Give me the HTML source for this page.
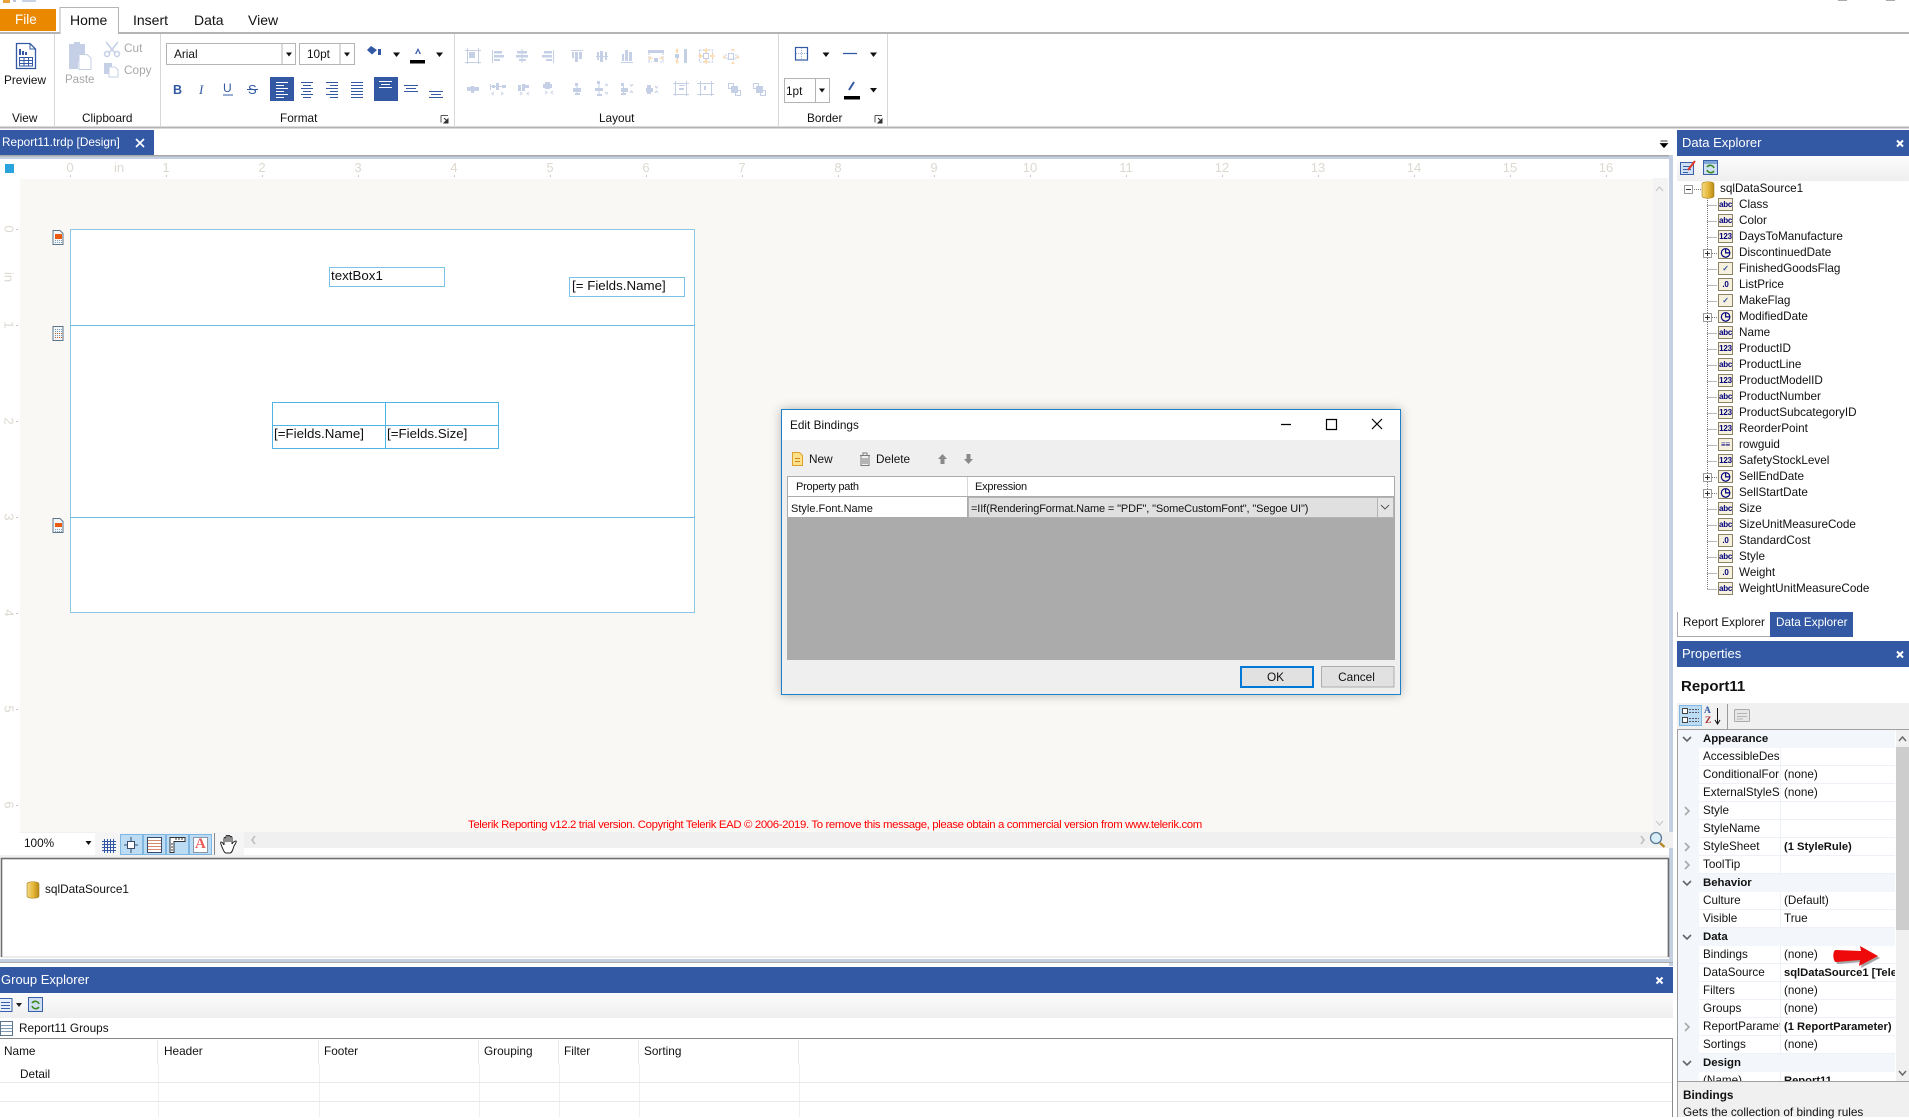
<!DOCTYPE html>
<html><head><meta charset="utf-8"><title>Report Designer</title>
<style>
html,body{margin:0;padding:0;background:#fff}
body{width:1909px;height:1117px;position:relative;overflow:hidden;font:11.8px "Liberation Sans",sans-serif;color:#111}
.a,.t{position:absolute}
.t{white-space:nowrap;line-height:16px}
.w{color:#fff}.g{color:#a8a8a8}
.tab{font-size:14px}
.lbl{text-align:center}
.rul{color:#ddd8d0;font-size:13px;transform:translateX(-50%)}
.rv{color:#ddd8d0;font-size:13px;transform:translate(-50%,-50%) rotate(90deg);line-height:13px}
.bx{position:absolute;box-sizing:border-box;border:1px solid #7cc1e6;background:#fff}
.d{font-size:13.33px}
#tree{position:absolute;left:1677px;top:181px;width:232px;font-size:11.7px}
.r{position:relative;height:16px;line-height:16px;padding-left:62px;white-space:nowrap}
.ic{position:absolute;left:41px;top:1px;width:13px;height:11px;border:1px solid #8c8366;background:#f6f0df;color:#00007a;font:bold 8px/11px "Liberation Sans",sans-serif;text-align:center;letter-spacing:-.2px}
.ic.k{font-size:12px;line-height:10px}
#pg{position:absolute;left:1678px;top:730px;width:217px;height:351px;overflow:hidden;background:#f3f6fb;font-size:11.7px}
.pc{height:18px;line-height:18px;font-weight:bold;padding-left:25px;background:#f3f6fb;font-size:11.4px}
.pr{height:18px;margin-left:21px;background:#fff;border-bottom:1px solid #eef2f8;box-sizing:border-box;line-height:18px;white-space:nowrap;overflow:hidden}
.pr b{font-weight:normal;display:inline-block;vertical-align:top;width:77px;padding-left:4px;overflow:hidden;height:17px;border-right:1px solid #eef2f8}
.pr span{padding-left:3px}
.pr em{font-style:normal;font-weight:bold;font-size:11.2px}
</style></head><body>

<svg class="a" style="left:0;top:0" width="1909" height="1117" viewBox="0 0 1909 1117">
<!-- top bits -->
<rect x="3" y="0" width="7" height="3" fill="#e9a23a"/><rect x="13" y="0" width="3" height="2" fill="#b9c5dc"/><rect x="22" y="0" width="14" height="2" fill="#c9d3e6"/>
<rect x="1838" y="0" width="9" height="1" fill="#aaa"/><rect x="1886" y="0" width="9" height="1" fill="#aaa"/>
<!-- ribbon lines -->
<rect x="0" y="32" width="1909" height="2" fill="#b4b4b4"/>
<rect x="0" y="126.500" width="1909" height="2" fill="#b4b4b4"/>
<path d="M54.500 34V126M160.500 34V126M454.500 34V126M778.500 34V126M887.500 34V126" stroke="#d8d8d8"/>
<!-- home tab -->
<path d="M60 33V7.500H118.500V33" fill="#fff" stroke="#b4b4b4"/><rect x="60.500" y="31" width="57.500" height="3" fill="#fff"/>
<rect x="0" y="9" width="56" height="22" fill="#ea8800"/>
<!-- Preview icon -->
<g fill="none" stroke="#3359a4"><path d="M16.500 43.500H30L35.500 49V68.500H16.500Z" stroke-width="1.300"/><path d="M30 43.500V49H35.500"/><path d="M19.500 57.500H32.500V66H19.500ZM19.500 60.500H32.500M19.500 63.500H32.500M24 57.500V66M28.500 57.500V66"/></g>
<path d="M19 49h2v6h-2zM22 51h2v4h-2zM25 52h2v3h-2z" fill="#3359a4"/>
<!-- Paste -->
<path d="M69 44H85V62H78V69H69Z" fill="#c5d0e6"/><rect x="74" y="42" width="6" height="4" fill="#c5d0e6"/>
<path d="M79 54.500H87L91 58V69.500H79Z" fill="#fff" stroke="#c5d0e6"/>
<!-- Cut -->
<g fill="none" stroke="#c5d0e6" stroke-width="1.500"><path d="M106 42L115 53M118 42L109 53"/><circle cx="107" cy="54" r="2.500"/><circle cx="117" cy="54" r="2.500"/></g>
<!-- Copy -->
<path d="M104 63H112V74H104Z" fill="#c5d0e6"/><path d="M109 67H115L118 70V77H109Z" fill="#fff" stroke="#c5d0e6"/>
<!-- combos -->
<g fill="#fff" stroke="#b4b4b4"><rect x="166.500" y="43.500" width="129" height="21"/><rect x="299.500" y="43.500" width="55" height="21"/><rect x="784.500" y="78.500" width="45" height="24"/></g>
<path d="M282 44V64M340 44V64M815.500 79V102" stroke="#b4b4b4"/>
<g fill="#111"><path d="M286 52.500h6l-3 4zM344 52.500h6l-3 4zM393 52.500h7l-3.500 4.500zM436 52.500h7l-3.500 4.500zM819 88.500h6l-3 4zM822.500 52.500h7l-3.500 4.500zM870 52.500h7l-3.500 4.500zM870 88h7l-3.500 4.500z"/></g>
<!-- fill / font color -->
<path d="M367 50L371 46L377 50L372 54.500ZM378 49h3v6h-3z" fill="#3359a4"/><path d="M418 48l-3 6h1.500l1.500-3.500 1.500 3.500h1.500z" fill="#3359a4"/>
<rect x="410" y="60" width="15" height="3.500" fill="#000"/>
<rect x="223" y="94.500" width="10" height="1" fill="#3359a4"/><rect x="247" y="89" width="11" height="1" fill="#3359a4"/>
<!-- align -->
<rect x="270" y="77" width="24" height="24" fill="#3359a4"/><rect x="374" y="77" width="24" height="24" fill="#3359a4"/>
<path d="M276 82.500h12M276 85.500h8M276 88.500h12M276 91.500h8M276 94.500h12M276 97.500h8M379 81.500h13M381 84.500h9M379 87.500h13" stroke="#fff"/>
<path d="M301 82.500h12M303 85.500h8M301 88.500h12M303 91.500h8M301 94.500h12M303 97.500h8M326 82.500h12M330 85.500h8M326 88.500h12M330 91.500h8M326 94.500h12M330 97.500h8M351 82.500h12M351 85.500h12M351 88.500h12M351 91.500h12M351 94.500h12M351 97.500h12M404 85.500h14M406 88.500h10M404 91.500h14M429 91.500h14M431 94.500h10M429 97.500h14" stroke="#3359a4"/>
<!-- launcher -->
<path d="M441 115.500h7M441 115.500v7M875 115.500h7M875 115.500v7" stroke="#555" fill="none"/><path d="M444 118l4 4M878 118l4 4M448 119v4h-4zM882 119v4h-4z" stroke="#333" fill="#333"/>
<!-- layout icons -->
<g fill="#c5d0e6" stroke="none">
<path d="M465 50h16v1h-16zM465 62h16v1h-16zM467 48h1v16h-1zM478 48h1v16h-1zM469 52h6v6h-6z"/>
<path d="M492 50h1v13h-1zM494 51h8v2.500h-8zM494 55h10v2.500h-10zM494 59h6v2h-6z"/>
<path d="M521.500 49h1v14h-1zM517 51h10v2.500h-10zM516 55h12v2.500h-12zM519 59h7v2h-7z"/>
<path d="M553 50h1v13h-1zM544 51h8v2.500h-8zM542 55h10v2.500h-10zM546 59h6v2h-6z"/>
<path d="M571 50h12v1h-12zM572 52h2v6h-2zM575 52h3v10h-3zM579 52h3v7h-3z"/>
<path d="M596 56h12v1h-12zM597 52h2v8h-2zM600 51h3v11h-3zM605 52h2v8h-2z"/>
<path d="M621 62h12v1h-12zM622 54h2v7h-2zM625 50h3v11h-3zM629 52h3v9h-3z"/>
<path d="M648 50h16v3h-16zM654 58h4v4h-4zM684 49h3v14h-3zM675 54h4v4h-4zM703 53h1v6h-1zM708 53h1v6h-1zM703 53h6v1h-6zM703 58h6v1h-6zM728 53h6v1h-6zM728 59h6v1h-6zM728 53h1v7h-1zM733 53h1v7h-1z"/>
<path d="M467 87h12v4h-12zM471 86h3v7h-3zM490 84h1v6h-1zM491 86h15v1h-15zM502 85h4v3h-4zM492 85h3v3h-3zM496 83h3v7h-3zM518 85h3v6h-3zM522 84h3v7h-3zM525 85h4v3h-4zM543 84h9v4h-9zM545 82h5v7h-5z"/>
<path d="M575 83h3v3h-3zM573 88h8v4h-8zM575 93h5v2h-5zM576.500 85h1v9h-1zM597 81h3v3h-3zM595 88h8v3h-8zM597 94h5v2h-5zM598.500 83h1v12h-1zM621 83h3v3h-3zM621 88h7v4h-7zM621 93h5v2h-5zM623 86h1v8h-1zM647 85h4v9h-4zM646 88h7v4h-7z"/>
<path d="M673 83h16v1h-16zM673 94h16v1h-16zM675 81h1v15h-1zM686 81h1v15h-1zM679 85h6v1h-6zM679 88h5v2h-5zM697 83h17v1h-17zM697 94h17v1h-17zM700 81h1v15h-1zM711 81h1v15h-1zM704 86h2v4h-2z"/>
<path d="M731 86h7v7h-7zM756 86h7v7h-7z"/>
</g>
<g fill="none" stroke="#c5d0e6">
<path d="M728.500 83.500h5v5h-5zM735.500 90.500h5v5h-5zM753.500 83.500h5v5h-5zM760.500 90.500h5v5h-5z"/>
<path d="M494 92l-2 1.500 2 1.500M501 92l2 1.500-2 1.500M520 92l2 1.500-2 1.500M529 92l-2 1.500 2 1.500M545 91l2 1.500-2 1.500M553 91l-2 1.500 2 1.500M605 86l1.500-2 1.500 2M605 92l1.500 2 1.500-2M630 84l1.500 2 1.500-2M630 93l1.500-2 1.500 2M655 86l1.500 2 1.500-2M655 93l1.500-2 1.500 2"/>
<path d="M649 53v9M663 53v9M648 62h4M660 62h4M677.500 51v11M699.500 50v12h13V50zM726 54v5h10v-5" stroke-dasharray="2 1"/>
</g>
<g fill="#fbdcb4">
<path d="M648 58l3-2v1.500h2v1h-2V60zM664 58l-3-2v1.500h-2v1h2V60zM677 48l2 3h-1v2h-2v-2h-1zM677 64l2-3h-1v-2h-2v2h-1z"/>
<path d="M706 48l3 3h-2v2h-2v-2h-2zM706 64l3-3h-2v-2h-2v2h-2zM698 56l3-3v2h2v2h-2v2zM715 56l-3-3v2h-2v2h2v2zM731 49h4l-2 3zM731 64h4l-2-3zM723 55v4l3-2zM739 55v4l-3-2z"/>
</g>
<!-- border group -->
<rect x="795.500" y="47.500" width="12" height="12.500" fill="none" stroke="#3359a4" stroke-width="1.200"/>
<path d="M801.500 48v12M796 53.500h11" stroke="#9db0d6" stroke-dasharray="1 1"/>
<path d="M843 53.500h14" stroke="#3359a4" stroke-width="1.300"/>
<path d="M849 90l5-8" stroke="#3359a4" stroke-width="2"/><rect x="844" y="96" width="16" height="3.500" fill="#000"/>
<!-- doc tabs -->
<rect x="0" y="130" width="154" height="25" fill="#3359a4"/>
<rect x="0" y="155" width="1669" height="1.500" fill="#a8a8a8"/><rect x="0" y="156.500" width="1669" height="2.500" fill="#c4cfe2"/>
<path d="M136 139l8 8M144 139l-8 8" stroke="#fff" stroke-width="1.600"/>
<path d="M1660.500 141h7M1660.500 143.500h7l-3.500 4z" stroke="#000" fill="#000" stroke-width=".8"/>
<!-- design bg -->
<rect x="20" y="179" width="1633" height="653" fill="#f9f8f5"/>
<rect x="1653" y="159" width="15" height="673" fill="#f4f4f4"/><rect x="1653" y="159" width="15" height="19" fill="#fff"/>
<rect x="1669" y="155" width="4" height="811" fill="#c4cfe2"/>
<path d="M1656 191l3.500-4 3.500 4M1656 821l3.500 4 3.500-4" fill="none" stroke="#ccc" stroke-width="1.300"/>
<rect x="5" y="164" width="9" height="9" fill="#29a3de"/>
<path d="M70.500 175v2M166.500 175v2M262.500 175v2M358.500 175v2M454.500 175v2M550.500 175v2M646.500 175v2M742.500 175v2M838.500 175v2M934.500 175v2M1030.500 175v2M1126.500 175v2M1222.500 175v2M1318.500 175v2M1414.500 175v2M1510.500 175v2M1606.500 175v2" stroke="#c8c8c8"/>
<path d="M16 229.500h2M16 325.500h2M16 421.500h2M16 517.500h2M16 613.500h2M16 709.500h2M16 805.500h2" stroke="#c8c8c8"/>
<rect x="70.500" y="229.500" width="624" height="383" fill="#fff" stroke="#8cc8e6"/>
<path d="M70 325.500H695M70 517.500H695" stroke="#6fbbe0"/>
<!-- section icons -->
<g stroke="#5d7489" fill="#f4f7fa" stroke-width="1">
<path d="M53 230.500h7l3 3v11h-10zM53 326.500h10v14h-10zM53 518.500h7l3 3v11h-10z"/></g>
<rect x="55" y="234" width="7" height="5" fill="#ec5a12"/>
<path d="M55 240.500h7M55 242.500h7M55 329.500h7M55 331.500h7M55 335.500h7M55 529.500h7M55 531.500h7" stroke="#7f9bb5" stroke-dasharray="1 1"/>
<path d="M55 333.500h7M55 337.500h7" stroke="#c8581e" stroke-dasharray="1 1"/>
<rect x="55" y="523" width="7" height="4" fill="#ec5a12"/>
<!-- bottom toolbar -->
<rect x="20" y="832" width="1653" height="16" fill="#f0f0f0"/>
<rect x="20" y="833" width="75" height="22" fill="#fff"/><path d="M85.500 841h6l-3 4z" fill="#111"/>
<rect x="95" y="832" width="149" height="23" fill="#f5f5f5"/>
<path d="M102 841.500h14M102 844.500h14M102 847.500h14M102 850.500h14M104.500 839v14M107.500 839v14M110.500 839v14M113.500 839v14" stroke="#3359a4"/>
<g fill="#bcdcf4" stroke="#7fb7e2"><rect x="120.500" y="834.500" width="22" height="20"/><rect x="143.500" y="834.500" width="22" height="20"/><rect x="166.500" y="834.500" width="22" height="20"/><rect x="189.500" y="834.500" width="22" height="20"/></g>
<path d="M214.500 833v22" stroke="#888"/>
<g fill="none" stroke="#3a4a6a"><path d="M131 837v16M124 845h14" /><rect x="127.500" y="841.500" width="7" height="7" fill="#fff"/></g>
<rect x="147.500" y="837.500" width="14" height="15" fill="#fff" stroke="#3a4a6a"/>
<path d="M148 840.500h13M148 843.500h13M148 846.500h13M148 849.500h13" stroke="#d58a70"/>
<path d="M170 837.500h15v4h-11v11h-4z" fill="#fff" stroke="#333"/><path d="M176 838v2M179 838v2M182 838v2M171 844h2M171 847h2M171 850h2" stroke="#333"/>
<rect x="193.500" y="837.500" width="14" height="15" fill="#fff" stroke="#8896aa"/>
<path d="M224 845V839c0-2 2-2 2 0M226 842v-5c0-2 2-2 2 0v5M228 842v-5c0-2 2-2 2 0v5M230 842v-4c0-2 2-2 2 0v6c1-2 3-3 4-3 1 1-1 3-2 5-1 3-2 7-4 7h-4c-2 0-3-4-4-6-1-3-2-4-1-5 1 0 2 1 3 3" fill="#fff" stroke="#222" stroke-width="1"/>
<path d="M255 836l-3 4 3 4M1641 836l3 4-3 4" fill="none" stroke="#bbb" stroke-width="1.500"/>
<circle cx="1656" cy="838" r="5.500" fill="#d9ecf7" stroke="#5a7a96" stroke-width="1.300"/><path d="M1660 843l4.500 4" stroke="#b48a2a" stroke-width="2.500"/>
<!-- sql box -->
<rect x="0" y="855" width="1669" height="4" fill="#f0f0f0"/>
<rect x="1.500" y="859" width="1666.500" height="98" fill="#fff" stroke="#d8d8d8"/>
<path d="M1.500 957V858.500H1668.500V957" fill="none" stroke="#6e6e6e" stroke-width="1.600"/>
<rect x="0" y="959" width="1673" height="3" fill="#c4cfe2"/><rect x="0" y="962" width="1673" height="1" fill="#aaa"/>
<defs><linearGradient id="db" x1="0" x2="1" y1="0" y2="0"><stop offset="0" stop-color="#f2d98a"/><stop offset=".5" stop-color="#e7b93b"/><stop offset="1" stop-color="#b88a18"/></linearGradient>
<linearGradient id="tb" x1="0" x2="0" y1="0" y2="1"><stop offset="0" stop-color="#fcfcfc"/><stop offset="1" stop-color="#efefef"/></linearGradient></defs>
<path d="M27 884c0-3 12-3 12 0v12c0 3-12 3-12 0z" fill="url(#db)" stroke="#a8801a" stroke-width=".6"/>
<!-- group explorer -->
<rect x="0" y="967" width="1673" height="26" fill="#3359a4"/>
<rect x="0" y="993" width="1673" height="25" fill="url(#tb)"/>
<path d="M1656.500 977.500l6 6M1662.500 977.500l-6 6" stroke="#fff" stroke-width="2"/>
<g><rect x="-1" y="998.500" width="13" height="13" fill="#e8f0fb" stroke="#3a5fa8"/><path d="M1 1002.500h9M1 1005.500h9M1 1008.500h9" stroke="#3a5fa8"/><path d="M16 1003h6l-3 4z" fill="#222"/>
<rect x="28.500" y="997.500" width="14" height="14" fill="#cfe0f4" stroke="#3a5fa8"/><path d="M32 1003a4 4 0 0 1 7 1M39 1007a4 4 0 0 1-7-1" fill="none" stroke="#3d8a1c" stroke-width="1.600"/></g>
<rect x="0.500" y="1021.500" width="12" height="14" fill="#fff" stroke="#5d7489"/><path d="M1 1025.500h11M1 1028.500h11M1 1031.500h11" stroke="#7f9bb5"/>
<rect x="0" y="1038" width="1673" height="1" fill="#8a8a8a"/>
<path d="M157.500 1040v24M318.500 1040v24M478.500 1040v24M558.500 1040v24M638.500 1040v24M798.500 1040v24" stroke="#e6e6e6"/>
<path d="M158.500 1064V1117M319.500 1064V1117M479.500 1064V1117M559.500 1064V1117M639.500 1064V1117M799.500 1064V1117" stroke="#efefef"/>
<path d="M0 1082.500H1672M0 1101.500H1672" stroke="#e8e8e8"/>
<rect x="1672" y="1038" width="1" height="79" fill="#8a8a8a"/>
<!-- right panel -->
<rect x="1673" y="130" width="236" height="987" fill="#fff"/>
<rect x="1677" y="130" width="232" height="26" fill="#3359a4"/>
<rect x="1677" y="156" width="232" height="25" fill="url(#tb)"/>
<path d="M1897 140.500l6 6M1903 140.500l-6 6" stroke="#fff" stroke-width="2"/>
<rect x="1680.500" y="162.500" width="13" height="12" fill="#cfe0f4" stroke="#3a5fa8"/><path d="M1683 166.500h8M1683 169.500h8M1683 172.500h5" stroke="#3a5fa8"/><path d="M1688 170l7-9" stroke="#e23a2a" stroke-width="2"/>
<rect x="1703.500" y="160.500" width="14" height="14" fill="#cfe0f4" stroke="#3a5fa8"/><rect x="1704" y="161" width="13" height="3" fill="#7fa6d8"/><path d="M1707 167a4 4 0 0 1 7 1M1714 171a4 4 0 0 1-7-1" fill="none" stroke="#3d8a1c" stroke-width="1.600"/>
<!-- tree lines -->
<path d="M1707.500 198V589M1707.500 205.500h10M1707.500 221.500h10M1707.500 237.500h10M1712 253.500h6M1707.500 269.500h10M1707.500 285.500h10M1707.500 301.500h10M1712 317.500h6M1707.500 333.500h10M1707.500 349.500h10M1707.500 365.500h10M1707.500 381.500h10M1707.500 397.500h10M1707.500 413.500h10M1707.500 429.500h10M1707.500 445.500h10M1707.500 461.500h10M1712 477.500h6M1712 493.500h6M1707.500 509.500h10M1707.500 525.500h10M1707.500 541.500h10M1707.500 557.500h10M1707.500 573.500h10M1707.500 589.500h10M1692 189.500h9" stroke="#777" stroke-dasharray="1 1" fill="none"/>
<g fill="#fff" stroke="#9a9a9a"><rect x="1684.500" y="185.500" width="8" height="8"/><rect x="1703.500" y="249.500" width="8" height="8"/><rect x="1703.500" y="313.500" width="8" height="8"/><rect x="1703.500" y="473.500" width="8" height="8"/><rect x="1703.500" y="489.500" width="8" height="8"/></g>
<path d="M1686 189.500h5M1705 253.500h5M1707.500 251v5M1705 317.500h5M1707.500 315v5M1705 477.500h5M1707.500 475v5M1705 493.500h5M1707.500 491v5" stroke="#333"/>
<path d="M1702 184c0-3 12-3 12 0v12c0 3-12 3-12 0z" fill="url(#db)" stroke="#a8801a" stroke-width=".6"/>
<!-- tree tabs -->
<path d="M1677.500 612V636.500H1770" fill="none" stroke="#a8a8a8"/>
<rect x="1770" y="612" width="83" height="25" fill="#3359a4"/>
<rect x="1677" y="641" width="232" height="26" fill="#3359a4"/>
<path d="M1897 651.500l6 6M1903 651.500l-6 6" stroke="#fff" stroke-width="2"/>
<rect x="1677" y="703" width="232" height="26" fill="#f0f0f0"/>
<rect x="1679.500" y="705.500" width="22" height="20" fill="#bcdcf4" stroke="#7fb7e2"/>
<g fill="#fff" stroke="#444"><rect x="1682.500" y="708.500" width="5" height="5"/><rect x="1682.500" y="717.500" width="5" height="5"/></g>
<path d="M1689 709.500h10M1689 712.500h10M1689 718.500h10M1689 721.500h10" stroke="#556" stroke-dasharray="2 1"/>
<path d="M1717.500 708V723M1715 720l2.500 4 2.500-4" fill="none" stroke="#111"/>
<path d="M1727.500 704v25" stroke="#9a9a9a"/>
<rect x="1734.500" y="709.500" width="15" height="12" rx="1" fill="#e6e6e6" stroke="#aaa"/><path d="M1737 713.500h10M1737 716.500h10M1737 719h6" stroke="#b5b5b5"/>
<rect x="1677" y="729" width="232" height="1" fill="#a0a0a0"/>
<rect x="1677" y="729" width="1" height="388" fill="#a0a0a0"/>
<rect x="1896" y="730" width="13" height="351" fill="#f0f0f0"/>
<rect x="1896" y="747" width="13" height="183" fill="#cdcdcd"/>
<path d="M1899 741l3.500-4 3.500 4M1899 1071l3.500 4 3.500-4" fill="none" stroke="#666" stroke-width="1.400"/>
<rect x="1677" y="1081" width="232" height="36" fill="#f0f0f0"/>
<rect x="1677" y="1081" width="232" height="1" fill="#a0a0a0"/>
<rect x="1677" y="1081" width="1" height="36" fill="#a0a0a0"/>
</svg>

<!-- ribbon text -->
<div class="t w tab" style="left:15px;top:12px;font-size:13.5px">File</div>
<div class="t tab" style="left:70px;top:12px">Home</div>
<div class="t tab" style="left:133px;top:12px">Insert</div>
<div class="t tab" style="left:194px;top:12px">Data</div>
<div class="t tab" style="left:248px;top:12px">View</div>
<div class="t" style="left:4px;top:72px">Preview</div>
<div class="t g" style="left:65px;top:72px;font-size:11.5px">Paste</div>
<div class="t g" style="left:124px;top:40px">Cut</div>
<div class="t g" style="left:124px;top:62px">Copy</div>
<div class="t" style="left:174px;top:46px">Arial</div>
<div class="t" style="left:307px;top:46px">10pt</div>
<div class="t" style="left:786px;top:83px">1pt</div>
<div class="t" style="left:173px;top:82px;font:bold 12.5px/16px 'Liberation Sans';color:#3359a4">B</div>
<div class="t" style="left:199px;top:82px;font:italic 13px/16px 'Liberation Serif';color:#3359a4">I</div>
<div class="t" style="left:223px;top:80px;font-size:12px;color:#3359a4">U</div>
<div class="t" style="left:248px;top:82px;font-size:13px;color:#3359a4">S</div>
<div class="t lbl" style="left:12px;top:110px">View</div>
<div class="t" style="left:82px;top:110px">Clipboard</div>
<div class="t" style="left:280px;top:110px">Format</div>
<div class="t" style="left:599px;top:110px">Layout</div>
<div class="t" style="left:807px;top:110px">Border</div>
<div class="t w" style="left:2px;top:134px">Report11.trdp [Design]</div>

<!-- rulers -->
<div class="t rul" style="left:70px;top:160px">0</div><div class="t rul" style="left:119px;top:160px">in</div>
<div class="t rul" style="left:166px;top:160px">1</div><div class="t rul" style="left:262px;top:160px">2</div><div class="t rul" style="left:358px;top:160px">3</div><div class="t rul" style="left:454px;top:160px">4</div><div class="t rul" style="left:550px;top:160px">5</div><div class="t rul" style="left:646px;top:160px">6</div><div class="t rul" style="left:742px;top:160px">7</div><div class="t rul" style="left:838px;top:160px">8</div><div class="t rul" style="left:934px;top:160px">9</div><div class="t rul" style="left:1030px;top:160px">10</div><div class="t rul" style="left:1126px;top:160px">11</div><div class="t rul" style="left:1222px;top:160px">12</div><div class="t rul" style="left:1318px;top:160px">13</div><div class="t rul" style="left:1414px;top:160px">14</div><div class="t rul" style="left:1510px;top:160px">15</div><div class="t rul" style="left:1606px;top:160px">16</div>
<div class="t rv" style="left:9px;top:229px">0</div><div class="t rv" style="left:9px;top:277px">in</div><div class="t rv" style="left:9px;top:325px">1</div><div class="t rv" style="left:9px;top:421px">2</div><div class="t rv" style="left:9px;top:517px">3</div><div class="t rv" style="left:9px;top:613px">4</div><div class="t rv" style="left:9px;top:709px">5</div><div class="t rv" style="left:9px;top:805px">6</div>

<!-- design items -->
<div class="bx" style="left:329px;top:267px;width:116px;height:20px"></div>
<div class="t d" style="left:331px;top:268px">textBox1</div>
<div class="bx" style="left:569px;top:277px;width:116px;height:20px"></div>
<div class="t d" style="left:572px;top:278px">[= Fields.Name]</div>
<div class="bx" style="left:272px;top:402px;width:227px;height:47px;border-color:#4fb3e3"></div>
<div class="a" style="left:272px;top:425px;width:227px;height:1px;background:#4fb3e3"></div>
<div class="a" style="left:385px;top:402px;width:1px;height:47px;background:#4fb3e3"></div>
<div class="t d" style="left:274px;top:426px">[=Fields.Name]</div>
<div class="t d" style="left:387px;top:426px">[=Fields.Size]</div>

<div class="t" style="left:468px;top:817px;color:#f00;font-size:11.4px;letter-spacing:-.37px">Telerik Reporting v12.2 trial version. Copyright Telerik EAD © 2006-2019. To remove this message, please obtain a commercial version from www.telerik.com</div>
<div class="t" style="left:24px;top:835px">100%</div>
<div class="t" style="left:195px;top:836px;font:bold 15px/16px 'Liberation Serif';color:#ec5a5a">A</div>
<div class="t" style="left:45px;top:881px">sqlDataSource1</div>

<!-- group explorer text -->
<div class="t w" style="left:1px;top:972px;font-size:13px">Group Explorer</div>
<div class="t" style="left:19px;top:1020px">Report11 Groups</div>
<div class="t" style="left:4px;top:1043px">Name</div>
<div class="t" style="left:164px;top:1043px">Header</div>
<div class="t" style="left:324px;top:1043px">Footer</div>
<div class="t" style="left:484px;top:1043px">Grouping</div>
<div class="t" style="left:564px;top:1043px">Filter</div>
<div class="t" style="left:644px;top:1043px">Sorting</div>
<div class="t" style="left:20px;top:1066px">Detail</div>

<!-- Data explorer text -->
<div class="t w" style="left:1682px;top:135px;font-size:13px">Data Explorer</div>
<div id="tree">
<div class="r" style="padding-left:43px">sqlDataSource1</div>
<div class="r"><i class="ic">abc</i>Class</div>
<div class="r"><i class="ic">abc</i>Color</div>
<div class="r"><i class="ic">123</i>DaysToManufacture</div>
<div class="r"><i class="ic k">◷</i>DiscontinuedDate</div>
<div class="r"><i class="ic" style="color:#3359a4">✓</i>FinishedGoodsFlag</div>
<div class="r"><i class="ic">.0</i>ListPrice</div>
<div class="r"><i class="ic" style="color:#3359a4">✓</i>MakeFlag</div>
<div class="r"><i class="ic k">◷</i>ModifiedDate</div>
<div class="r"><i class="ic">abc</i>Name</div>
<div class="r"><i class="ic">123</i>ProductID</div>
<div class="r"><i class="ic">abc</i>ProductLine</div>
<div class="r"><i class="ic">123</i>ProductModelID</div>
<div class="r"><i class="ic">abc</i>ProductNumber</div>
<div class="r"><i class="ic">123</i>ProductSubcategoryID</div>
<div class="r"><i class="ic">123</i>ReorderPoint</div>
<div class="r"><i class="ic">≡≡</i>rowguid</div>
<div class="r"><i class="ic">123</i>SafetyStockLevel</div>
<div class="r"><i class="ic k">◷</i>SellEndDate</div>
<div class="r"><i class="ic k">◷</i>SellStartDate</div>
<div class="r"><i class="ic">abc</i>Size</div>
<div class="r"><i class="ic">abc</i>SizeUnitMeasureCode</div>
<div class="r"><i class="ic">.0</i>StandardCost</div>
<div class="r"><i class="ic">abc</i>Style</div>
<div class="r"><i class="ic">.0</i>Weight</div>
<div class="r"><i class="ic">abc</i>WeightUnitMeasureCode</div>
</div>
<div class="t" style="left:1683px;top:615px;font-size:11.7px">Report Explorer</div>
<div class="t w" style="left:1776px;top:615px;font-size:11.7px">Data Explorer</div>

<!-- Properties -->
<div class="t w" style="left:1682px;top:646px;font-size:13px">Properties</div>
<div class="t" style="left:1681px;top:679px;font:bold 15px/16px 'Liberation Sans'">Report11</div>
<div class="t" style="left:1704px;top:706px;font:bold 9.500px/10px 'Liberation Serif';color:#3359a4">A</div>
<div class="t" style="left:1705px;top:716px;font:bold 9.500px/10px 'Liberation Serif';color:#a03030">Z</div>
<div id="pg">
<div class="pc">Appearance</div>
<div class="pr"><b>AccessibleDesc</b></div>
<div class="pr"><b>ConditionalFor</b><span>(none)</span></div>
<div class="pr"><b>ExternalStyleSh</b><span>(none)</span></div>
<div class="pr"><b>Style</b></div>
<div class="pr"><b>StyleName</b></div>
<div class="pr"><b>StyleSheet</b><span><em>(1 StyleRule)</em></span></div>
<div class="pr"><b>ToolTip</b></div>
<div class="pc">Behavior</div>
<div class="pr"><b>Culture</b><span>(Default)</span></div>
<div class="pr"><b>Visible</b><span>True</span></div>
<div class="pc">Data</div>
<div class="pr"><b>Bindings</b><span>(none)</span></div>
<div class="pr"><b>DataSource</b><span><em>sqlDataSource1 [Telerik.Reporting]</em></span></div>
<div class="pr"><b>Filters</b><span>(none)</span></div>
<div class="pr"><b>Groups</b><span>(none)</span></div>
<div class="pr"><b>ReportParamet</b><span><em>(1 ReportParameter)</em></span></div>
<div class="pr"><b>Sortings</b><span>(none)</span></div>
<div class="pc">Design</div>
<div class="pr"><b>(Name)</b><span><em>Report11</em></span></div>
</div>
<svg class="a" style="left:1678px;top:730px" width="217" height="351" viewBox="0 0 217 351">
<g fill="none" stroke="#666" stroke-width="1.600"><path d="M5 7l4 4 4-4M5 151l4 4 4-4M5 205l4 4 4-4M5 331l4 4 4-4"/></g>
<g fill="none" stroke="#aaa" stroke-width="1.600"><path d="M7 77l4 4-4 4M7 113l4 4-4 4M7 131l4 4-4 4M7 293l4 4-4 4"/></g>
<path d="M158 220L183 221L182 216L200 226L181 236L182 230L158 232C155 232 154 220 158 220Z" transform="translate(2,2)" fill="#000" opacity=".35"/>
<path d="M158 220L183 221L182 216L200 226L181 236L182 230L158 232C155 232 154 220 158 220Z" fill="#ee0a0a"/>
</svg>
<div class="t" style="left:1683px;top:1087px;font-weight:bold">Bindings</div>
<div class="t" style="left:1683px;top:1104px">Gets the collection of binding rules</div>

<!-- Dialog -->
<div class="a" style="left:781px;top:409px;width:620px;height:286px;box-sizing:border-box;border:1.500px solid #1f7fc8;background:#efefef;box-shadow:0 0 10px rgba(0,0,0,.28)">
<div class="a" style="left:0;top:0;width:100%;height:30px;background:#fff"></div>
</div>
<svg class="a" style="left:781px;top:409px" width="620" height="286" viewBox="781 409 620 286">
<path d="M1281 424.500h10M1326.500 419.500h10v10h-10zM1372 419l10 10M1382 419l-10 10" fill="none" stroke="#000" stroke-width="1.200"/>
<path d="M792.500 452.500h7l3 3v10h-10z" fill="#fde08a" stroke="#e0a12a"/><path d="M795 458.500h5M795 461.500h5" stroke="#c9841a"/>
<path d="M860 455.500h10M861 456v9.500h8V456M863 458v6M865 458v6M867 458v6M863 455v-2h4v2" fill="#f0f0f0" stroke="#7a7a7a"/>
<path d="M942.500 454l4.500 5h-2.500v5h-4v-5h-2.500zM968.500 464l4.500-5h-2.500v-5h-4v5h-2.500z" fill="#8a8a8a"/>
<rect x="787" y="476" width="608" height="184" fill="#ababab"/>
<rect x="788" y="477" width="606" height="19" fill="#fff"/>
<rect x="788" y="497" width="179" height="20" fill="#fff"/>
<rect x="968.500" y="497.500" width="425" height="20" fill="#e0e0e0" stroke="#b4b4b4"/>
<rect x="1377.500" y="497.500" width="16" height="20" fill="#e4e4e4" stroke="#b4b4b4"/>
<path d="M1381 505l4 4 4-4" fill="none" stroke="#555"/>
<path d="M967.500 477v19" stroke="#d8d8d8"/>
<rect x="1241" y="667" width="72" height="20" fill="#e1e1e1" stroke="#0078d7" stroke-width="2"/>
<rect x="1321.500" y="666.500" width="72.500" height="20.500" fill="#e1e1e1" stroke="#adadad"/>
</svg>
<div class="t" style="left:790px;top:417px">Edit Bindings</div>
<div class="t" style="left:809px;top:451px">New</div>
<div class="t" style="left:876px;top:451px">Delete</div>
<div class="t" style="left:796px;top:479px;font-size:11px;letter-spacing:-.25px">Property path</div>
<div class="t" style="left:975px;top:479px;font-size:11px;letter-spacing:-.25px">Expression</div>
<div class="t" style="left:791px;top:501px;font-size:11px">Style.Font.Name</div>
<div class="t" style="left:971px;top:501px;font-size:11px;letter-spacing:-.13px">=IIf(RenderingFormat.Name = "PDF", "SomeCustomFont", "Segoe UI")</div>
<div class="t" style="left:1239px;top:669px;width:73px;text-align:center">OK</div>
<div class="t" style="left:1320px;top:669px;width:73px;text-align:center">Cancel</div>
</body></html>
